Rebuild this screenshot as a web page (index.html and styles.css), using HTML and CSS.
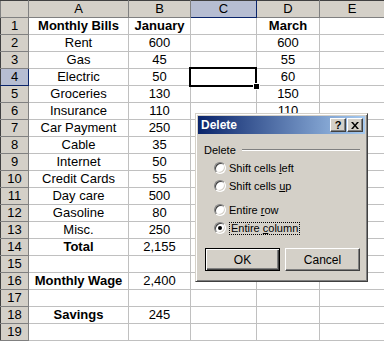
FILE: index.html
```html
<!DOCTYPE html>
<html lang="en">
<head>
    <meta charset="UTF-8">
    <meta name="viewport" content="width=device-width, initial-scale=1.0">
    <title>Monthly Bills</title>
    <link rel="stylesheet" href="styles.css">
</head>
<body>
    <div class="sheet">
        <table class="grid">
            <colgroup>
                <col class="col-hdr">
                <col class="col-a">
                <col class="col-b">
                <col class="col-c">
                <col class="col-d">
                <col class="col-e">
            </colgroup>
            <thead>
                <tr>
                    <th></th>
                    <th>A</th>
                    <th>B</th>
                    <th class="on">C</th>
                    <th>D</th>
                    <th>E</th>
                </tr>
            </thead>
            <tbody>
                <tr><th>1</th><td class="b">Monthly Bills</td><td class="b">January</td><td></td><td class="b">March</td><td></td></tr>
                <tr><th>2</th><td>Rent</td><td>600</td><td></td><td>600</td><td></td></tr>
                <tr><th>3</th><td>Gas</td><td>45</td><td></td><td>55</td><td></td></tr>
                <tr><th class="on">4</th><td>Electric</td><td>50</td><td></td><td>60</td><td></td></tr>
                <tr><th>5</th><td>Groceries</td><td>130</td><td></td><td>150</td><td></td></tr>
                <tr><th>6</th><td>Insurance</td><td>110</td><td></td><td>110</td><td></td></tr>
                <tr><th>7</th><td>Car Payment</td><td>250</td><td></td><td></td><td></td></tr>
                <tr><th>8</th><td>Cable</td><td>35</td><td></td><td></td><td></td></tr>
                <tr><th>9</th><td>Internet</td><td>50</td><td></td><td></td><td></td></tr>
                <tr><th>10</th><td>Credit Cards</td><td>55</td><td></td><td></td><td></td></tr>
                <tr><th>11</th><td>Day care</td><td>500</td><td></td><td></td><td></td></tr>
                <tr><th>12</th><td>Gasoline</td><td>80</td><td></td><td></td><td></td></tr>
                <tr><th>13</th><td>Misc.</td><td>250</td><td></td><td></td><td></td></tr>
                <tr><th>14</th><td class="b">Total</td><td>2,155</td><td></td><td></td><td></td></tr>
                <tr><th>15</th><td></td><td></td><td></td><td></td><td></td></tr>
                <tr><th>16</th><td class="b">Monthly Wage</td><td>2,400</td><td></td><td></td><td></td></tr>
                <tr><th>17</th><td></td><td></td><td></td><td></td><td></td></tr>
                <tr><th>18</th><td class="b">Savings</td><td>245</td><td></td><td></td><td></td></tr>
                <tr><th>19</th><td></td><td></td><td></td><td></td><td></td></tr>
            </tbody>
        </table>

        <!-- active cell C4 -->
        <div class="selection"><span class="handle"></span></div>

        <div class="dialog">
            <div class="titlebar">
                <span class="title">Delete</span>
                <span class="caption-btns">
                    <span class="cbtn help">?</span>
                    <span class="cbtn">
                        <svg width="8" height="7" viewBox="0 0 8 7">
                            <path d="M0 0h2l2 2.5L6 0h2L5 3.5 8 7H6L4 4.5 2 7H0l3-3.5z" fill="#000"/>
                        </svg>
                    </span>
                </span>
            </div>
            <div class="dialog-body">
                <div class="group-label">
                    <span>Delete</span>
                    <span class="etch"></span>
                </div>
                <div class="options">
                    <label class="radio"><span class="circle"></span><span>Shift cells <u>l</u>eft</span></label>
                    <label class="radio"><span class="circle"></span><span>Shift cells <u>u</u>p</span></label>
                    <label class="radio spaced"><span class="circle"></span><span>Entire <u>r</u>ow</span></label>
                    <label class="radio"><span class="circle checked"></span><span class="focus">Entire <u>c</u>olumn</span></label>
                </div>
                <div class="actions">
                    <span class="btn default"><span>OK</span></span>
                    <span class="btn"><span>Cancel</span></span>
                </div>
            </div>
        </div>
    </div>
</body>
</html>
```

FILE: styles.css
```css
body {
    margin: 0;
    background: #fff;
    font-family: "Liberation Sans", Arial, sans-serif;
}
.sheet {
    position: relative;
    width: 384px;
    height: 342px;
    overflow: hidden;
}
.grid {
    border-collapse: collapse;
    table-layout: fixed;
    width: 384px;
    font-size: 13px;
    color: #000;
}
.col-hdr { width: 28px; }
.col-a { width: 100px; }
.col-b { width: 62px; }
.col-c { width: 66px; }
.col-d { width: 63px; }
.col-e { width: 65px; }
.grid th,
.grid td {
    height: 16px;
    padding: 0;
    border: 1px solid #c0c0c0;
    text-align: center;
    line-height: 16px;
    white-space: nowrap;
    overflow: hidden;
    font-weight: normal;
}
.grid th {
    background: #d4d0c8;
    border-color: #808080;
}
.grid thead th {
    border-top-color: #404040;
}
.grid tbody th {
    border-left-color: #404040;
}
.grid th.on {
    background: #b6bdd2;
    border-right-color: #0a246a;
    border-bottom-color: #0a246a;
}
.grid td.b {
    font-weight: bold;
}
.selection {
    position: absolute;
    left: 189px;
    top: 67px;
    width: 64px;
    height: 16px;
    border: 2px solid #000;
}
.handle {
    position: absolute;
    right: -5px;
    bottom: -5px;
    width: 5px;
    height: 5px;
    background: #000;
    border: 1px solid #fff;
}
.dialog {
    position: absolute;
    left: 195px;
    top: 113px;
    width: 173px;
    height: 169px;
    box-sizing: border-box;
    padding: 2px;
    background: #d4d0c8;
    border: 1px solid;
    border-color: #d4d0c8 #404040 #404040 #d4d0c8;
    box-shadow: inset 1px 1px #fff, inset -1px -1px #808080;
    font-size: 11px;
    color: #000;
}
.titlebar {
    height: 18px;
    display: flex;
    align-items: center;
    justify-content: space-between;
    padding: 0 2px 0 3px;
    background: linear-gradient(to right, #0a246a, #a6caf0);
}
.title {
    color: #fff;
    font-weight: bold;
    font-size: 12px;
}
.caption-btns {
    display: flex;
    gap: 1px;
}
.cbtn {
    width: 16px;
    height: 14px;
    box-sizing: border-box;
    display: flex;
    align-items: center;
    justify-content: center;
    background: #d4d0c8;
    border: 1px solid;
    border-color: #fff #404040 #404040 #fff;
    box-shadow: inset -1px -1px #808080;
}
.cbtn.help {
    font-weight: bold;
    font-size: 11px;
    line-height: 12px;
}
.dialog-body {
    padding: 9px 5px 0 6px;
}
.group-label {
    display: flex;
    align-items: center;
    gap: 6px;
    height: 13px;
}
.etch {
    flex: 1;
    height: 1px;
    background: #808080;
    border-bottom: 1px solid #fff;
}
.options {
    display: flex;
    flex-direction: column;
    padding: 3px 0 0 10px;
}
.radio {
    display: flex;
    align-items: center;
    gap: 3px;
    height: 18px;
}
.radio.spaced {
    margin-top: 6px;
}
.circle {
    position: relative;
    width: 12px;
    height: 12px;
    box-sizing: border-box;
    border-radius: 50%;
    background: #fff;
    border: 1px solid;
    border-color: #808080 #fff #fff #808080;
    box-shadow: inset 1px 1px #404040, inset -1px -1px #d4d0c8;
}
.circle.checked::after {
    content: "";
    position: absolute;
    left: 3px;
    top: 3px;
    width: 4px;
    height: 4px;
    border-radius: 50%;
    background: #000;
}
.focus {
    padding: 0 1px;
    border: 1px dotted #000;
    line-height: 11px;
}
.actions {
    display: flex;
    gap: 5px;
    padding: 11px 0 0 1px;
}
.btn {
    width: 75px;
    height: 23px;
    box-sizing: border-box;
    display: flex;
    align-items: center;
    justify-content: center;
    background: #d4d0c8;
    border: 1px solid;
    border-color: #fff #404040 #404040 #fff;
    box-shadow: inset -1px -1px #808080;
    font-size: 12px;
}
.btn.default {
    border: 1px solid #000;
    box-shadow: inset 1px 1px #fff, inset -1px -1px #404040, inset -2px -2px #808080;
}
```
